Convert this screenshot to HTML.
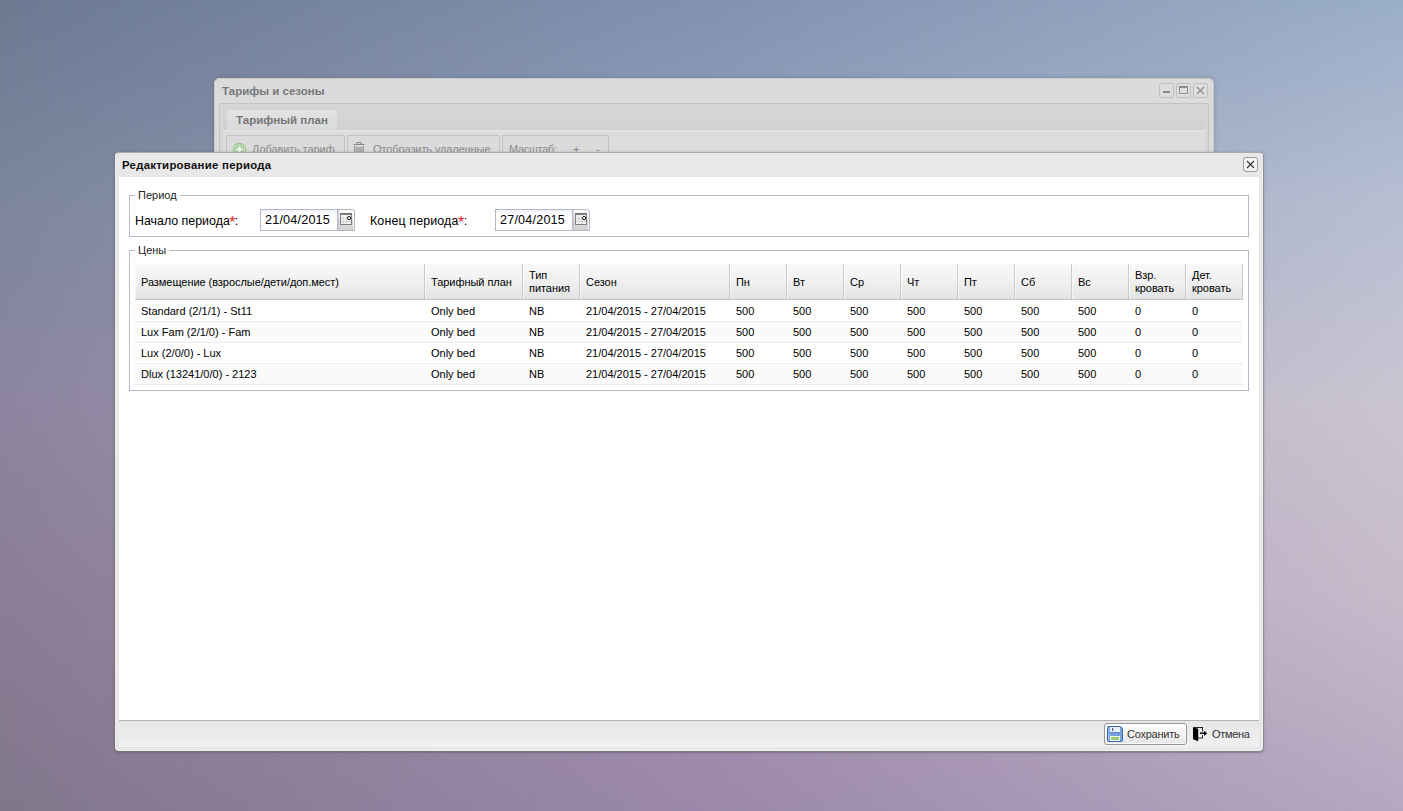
<!DOCTYPE html>
<html lang="ru">
<head>
<meta charset="utf-8">
<title>Редактирование периода</title>
<style>
*{box-sizing:border-box;margin:0;padding:0}
html,body{width:1403px;height:811px;overflow:hidden}
body{position:relative;font-family:"Liberation Sans",sans-serif;font-size:11px;color:#000;
background:linear-gradient(to bottom,#6c7a92 0%,#7d869f 24.7%,#8d85a0 49.5%,#8b7d96 74%,#81778c 100%)}
.abs{position:absolute}
#bgc{left:0;top:0;width:1403px;height:811px;
background:linear-gradient(to bottom,#8291b0 0%,#8897b5 8.6%,#99a2b8 24.7%,#aba5b9 49.5%,#a997b2 74%,#9f8aac 93.7%,#9b88ab 100%);
-webkit-mask-image:linear-gradient(to right,rgba(0,0,0,0) 0%,rgba(0,0,0,1) 50%);mask-image:linear-gradient(to right,rgba(0,0,0,0) 0%,rgba(0,0,0,1) 50%)}
#bgr{left:0;top:0;width:1403px;height:811px;
background:linear-gradient(to bottom,#9aaec8 0%,#b6bed2 24.7%,#cac5d2 49.5%,#c7bacb 74%,#b5a7c0 100%);
-webkit-mask-image:linear-gradient(to right,rgba(0,0,0,0) 50%,rgba(0,0,0,1) 100%);mask-image:linear-gradient(to right,rgba(0,0,0,0) 50%,rgba(0,0,0,1) 100%)}

/* ---------- background (masked) window ---------- */
#win{left:214px;top:78px;width:1000px;height:200px;background:#dbdbdb;border:1px solid #c9c9c9;border-radius:5px 5px 0 0;
box-shadow:0 0 4px rgba(80,80,100,.35)}
#win .ttl{left:7px;top:5px;font-weight:bold;font-size:11.5px;color:#777;white-space:nowrap;line-height:14px}
.tool{top:4px;width:15px;height:15px;border:1px solid #bebebe;border-radius:3px;background:#dedede}
#win .inner{left:4px;top:24px;width:990px;height:180px;border:1px solid #c4c4c4;background:#d6d6d6}
#win .strip{left:3px;top:3px;width:982px;height:23px;background:linear-gradient(#d8d8d8,#d1d1d1);border:1px solid #d2d2d2;border-bottom:none}
#win .tab{left:6px;top:5px;width:112px;height:21px;border:1px solid #d2d2d2;border-bottom:none;border-radius:4px 4px 0 0;background:linear-gradient(#e2e2e2,#dadada)}
#win .tab span{position:absolute;left:9px;top:3px;font-weight:bold;font-size:11.5px;color:#777;white-space:nowrap;line-height:14px}
#win .tbar{left:3px;top:26px;width:982px;height:60px;background:#dcdcdc;border-top:2px solid #e2e2e2}
.tbtn{top:3px;height:30px;border:1px solid #c3c3c3;border-radius:2px;background:#dbdbdb;color:#8a8a8a;font-size:11px;white-space:nowrap}
.tbtn span{position:absolute;top:6px;line-height:14px}

/* ---------- dialog ---------- */
#dlg{left:115px;top:152px;width:1148px;height:599px;background:#e8e8e8;border:1px solid #efefef;border-top-color:#a9a7a7;border-radius:4px;
box-shadow:0 1px 0 1px rgba(100,100,100,.3),0 1px 3px 1px rgba(90,90,90,.3)}
#dlg .ttl{left:6px;top:6px;font-weight:bold;font-size:11.4px;letter-spacing:.27px;color:#111;white-space:nowrap;line-height:13px}
#dlg .close{left:1127px;top:4px;width:15px;height:15px;border:1px solid #9a9a9a;border-radius:3px;background:#f4f4f4}
#body{left:3px;top:24px;width:1140px;height:544px;background:#fff;border-bottom:1px solid #b9b0b0}
#foot{left:3px;top:568px;width:1140px;height:26px;background:linear-gradient(#e6e6e6,#f1f1f1)}

fieldset{position:absolute;border:1px solid #b5b8c8;}
.lg{position:absolute;top:-7px;left:5px;background:#fff;padding:0 3px;font-size:11px;color:#222;line-height:13px;white-space:nowrap}
.lbl{position:absolute;font-size:12.4px;line-height:15px;white-space:nowrap;color:#000}
.lbl b{color:#e8232b;font-weight:normal;font-size:16px;line-height:0;position:relative;top:2.5px;margin:0 -.6px}
.inp{position:absolute;height:22px;width:78px;border:1px solid #b5b8c8;background:linear-gradient(#eef0f4 0,#fff 5px);font-size:12.6px;letter-spacing:.2px;line-height:20px;padding-left:4px;white-space:nowrap}
.trg{position:absolute;height:22px;width:17px}

/* grid */
#grid{left:5px;top:13px;width:1108px}
#hd{left:0;top:0;width:1108px;height:36px;background:linear-gradient(#f9f9f9 0,#f0f0f0 50%,#e3e4e6 100%);border-bottom:1px solid #c5c5c5}
.hc{position:absolute;top:0;height:35px;border-right:1px solid #cbcbcb;border-left:1px solid rgba(255,255,255,.55);font-size:11px;letter-spacing:-.05px;line-height:13px;color:#000;white-space:nowrap}
.hc span{position:absolute;left:5px}
.row{position:absolute;left:0;width:1108px;height:21px;border-bottom:1px solid #ededed;background:#fff}
.row.alt{background:#fafafa}
.row span{position:absolute;top:4px;font-size:11px;line-height:13px;white-space:nowrap;color:#000}

.btn{position:absolute;font-size:11px;line-height:13px;white-space:nowrap;color:#333}
</style>
</head>
<body>
<div id="bgc" class="abs"></div>
<div id="bgr" class="abs"></div>

<div id="win" class="abs">
  <div class="ttl abs">Тарифы и сезоны</div>
  <div class="tool abs" style="left:944px"><svg width="13" height="13" viewBox="0 0 13 13"><rect x="3" y="7" width="7" height="2" fill="#8c8c8c"/></svg></div>
  <div class="tool abs" style="left:961px"><svg width="13" height="13" viewBox="0 0 13 13"><rect x="2.5" y="2.5" width="8" height="7" fill="none" stroke="#8c8c8c"/><rect x="2" y="2" width="9" height="2" fill="#8c8c8c"/></svg></div>
  <div class="tool abs" style="left:978px"><svg width="13" height="13" viewBox="0 0 13 13"><path d="M3 3 L10 10 M10 3 L3 10" stroke="#8c8c8c" stroke-width="1.3" fill="none"/></svg></div>
  <div class="inner abs">
    <div class="strip abs"></div>
    <div class="tab abs"><span>Тарифный план</span></div>
    <div class="tbar abs">
      <div class="tbtn abs" style="left:3px;width:119px">
        <svg class="abs" style="left:5px;top:6px" width="15" height="15" viewBox="0 0 15 15"><circle cx="7.5" cy="7.5" r="6.7" fill="#96c48b"/><circle cx="7.5" cy="7.5" r="5.6" fill="#d3e8cd"/><circle cx="7.5" cy="7.5" r="4.7" fill="#a2cd98"/><path d="M7.5 4.2 V10.8 M4.2 7.5 H10.8" stroke="#f2f8f0" stroke-width="2.2"/></svg>
        <span style="left:25px;letter-spacing:-.1px">Добавить тариф</span></div>
      <div class="tbtn abs" style="left:124px;width:153px">
        <svg class="abs" style="left:5px;top:5px" width="12" height="16" viewBox="0 0 12 16"><path d="M0.5 3.5 H11.5 M4 3 V1.5 H8 V3 M1.8 5 V15 H10.2 V5 M4 6 V14 M6 6 V14 M8 6 V14" stroke="#878787" stroke-width="1.1" fill="none"/></svg>
        <span style="left:25px;letter-spacing:-.1px">Отобразить удаленные</span></div>
      <div class="tbtn abs" style="left:279px;width:107px">
        <span style="left:6px;letter-spacing:-.3px">Масштаб:</span><span style="left:70px">+</span><span style="left:93px">-</span></div>
    </div>
  </div>
</div>

<div id="dlg" class="abs">
  <div class="ttl abs">Редактирование периода</div>
  <div class="close abs"><svg width="13" height="13" viewBox="0 0 13 13"><path d="M3 3 L10 10 M10 3 L3 10" stroke="#333" stroke-width="1.15" fill="none"/></svg></div>
  <div id="body" class="abs">
    <fieldset style="left:10px;top:18px;width:1120px;height:42px">
      <div class="lg">Период</div>
      <div class="lbl" style="left:5px;top:18px">Начало периода<b>*</b>:</div>
      <div class="inp" style="left:130px;top:13px">21/04/2015</div><div class="trg" style="left:208px;top:13px"><svg width="17" height="22" viewBox="0 0 17 22"><defs><linearGradient id="tg" x1="0" y1="0" x2="0" y2="1"><stop offset="0" stop-color="#fbfbfb"/><stop offset=".4" stop-color="#f1f1f1"/><stop offset=".5" stop-color="#dcdcdc"/><stop offset="1" stop-color="#d0d0d0"/></linearGradient></defs><path d="M0 0.5 H14.5 Q16.5 0.5 16.5 2.5 V21.5 H0 Z" fill="url(#tg)" stroke="#b5b8c8"/><path d="M15.5 2 V20.5" stroke="#f7f7f7"/><rect x="2.5" y="4.5" width="11" height="11" fill="#f4f4f4" stroke="#808080"/><rect x="2" y="4" width="12" height="2" fill="#7a7a7a"/><path d="M5.5 7 V15 M8.5 7 V15 M3 9.5 H13 M3 12.5 H13" stroke="#d8d8d8"/><circle cx="11.1" cy="9.1" r="1.6" fill="#fff" stroke="#111" stroke-width="1"/></svg></div>
      <div class="lbl" style="left:240px;top:18px;letter-spacing:.15px">Конец периода<b>*</b>:</div>
      <div class="inp" style="left:365px;top:13px">27/04/2015</div><div class="trg" style="left:443px;top:13px"><svg width="17" height="22" viewBox="0 0 17 22"><defs><linearGradient id="tg2" x1="0" y1="0" x2="0" y2="1"><stop offset="0" stop-color="#fbfbfb"/><stop offset=".4" stop-color="#f1f1f1"/><stop offset=".5" stop-color="#dcdcdc"/><stop offset="1" stop-color="#d0d0d0"/></linearGradient></defs><path d="M0 0.5 H14.5 Q16.5 0.5 16.5 2.5 V21.5 H0 Z" fill="url(#tg2)" stroke="#b5b8c8"/><path d="M15.5 2 V20.5" stroke="#f7f7f7"/><rect x="2.5" y="4.5" width="11" height="11" fill="#f4f4f4" stroke="#808080"/><rect x="2" y="4" width="12" height="2" fill="#7a7a7a"/><path d="M5.5 7 V15 M8.5 7 V15 M3 9.5 H13 M3 12.5 H13" stroke="#d8d8d8"/><circle cx="11.1" cy="9.1" r="1.6" fill="#fff" stroke="#111" stroke-width="1"/></svg></div>
    </fieldset>
    <fieldset style="left:10px;top:73px;width:1120px;height:141px">
      <div class="lg">Цены</div>
      <div id="grid" class="abs">
        <div id="hd" class="abs">
<div class="hc" style="left:0px;width:290px"><span style="top:12px">Размещение (взрослые/дети/доп.мест)</span></div>
<div class="hc" style="left:290px;width:98px"><span style="top:12px">Тарифный план</span></div>
<div class="hc" style="left:388px;width:57px"><span style="top:5px">Тип<br>питания</span></div>
<div class="hc" style="left:445px;width:150px"><span style="top:12px">Сезон</span></div>
<div class="hc" style="left:595px;width:57px"><span style="top:12px">Пн</span></div>
<div class="hc" style="left:652px;width:57px"><span style="top:12px">Вт</span></div>
<div class="hc" style="left:709px;width:57px"><span style="top:12px">Ср</span></div>
<div class="hc" style="left:766px;width:57px"><span style="top:12px">Чт</span></div>
<div class="hc" style="left:823px;width:57px"><span style="top:12px">Пт</span></div>
<div class="hc" style="left:880px;width:57px"><span style="top:12px">Сб</span></div>
<div class="hc" style="left:937px;width:57px"><span style="top:12px">Вс</span></div>
<div class="hc" style="left:994px;width:57px"><span style="top:5px">Взр.<br>кровать</span></div>
<div class="hc" style="left:1051px;width:57px"><span style="top:5px">Дет.<br>кровать</span></div>
</div>
<div class="row" style="top:37px"><span style="left:6px">Standard (2/1/1) - St11</span><span style="left:296px">Only bed</span><span style="left:394px">NB</span><span style="left:451px">21/04/2015 - 27/04/2015</span><span style="left:601px">500</span><span style="left:658px">500</span><span style="left:715px">500</span><span style="left:772px">500</span><span style="left:829px">500</span><span style="left:886px">500</span><span style="left:943px">500</span><span style="left:1000px">0</span><span style="left:1057px">0</span></div>
<div class="row alt" style="top:58px"><span style="left:6px">Lux Fam (2/1/0) - Fam</span><span style="left:296px">Only bed</span><span style="left:394px">NB</span><span style="left:451px">21/04/2015 - 27/04/2015</span><span style="left:601px">500</span><span style="left:658px">500</span><span style="left:715px">500</span><span style="left:772px">500</span><span style="left:829px">500</span><span style="left:886px">500</span><span style="left:943px">500</span><span style="left:1000px">0</span><span style="left:1057px">0</span></div>
<div class="row" style="top:79px"><span style="left:6px">Lux (2/0/0) - Lux</span><span style="left:296px">Only bed</span><span style="left:394px">NB</span><span style="left:451px">21/04/2015 - 27/04/2015</span><span style="left:601px">500</span><span style="left:658px">500</span><span style="left:715px">500</span><span style="left:772px">500</span><span style="left:829px">500</span><span style="left:886px">500</span><span style="left:943px">500</span><span style="left:1000px">0</span><span style="left:1057px">0</span></div>
<div class="row alt" style="top:100px"><span style="left:6px">Dlux (13241/0/0) - 2123</span><span style="left:296px">Only bed</span><span style="left:394px">NB</span><span style="left:451px">21/04/2015 - 27/04/2015</span><span style="left:601px">500</span><span style="left:658px">500</span><span style="left:715px">500</span><span style="left:772px">500</span><span style="left:829px">500</span><span style="left:886px">500</span><span style="left:943px">500</span><span style="left:1000px">0</span><span style="left:1057px">0</span></div>
      </div>
    </fieldset>
  </div>
  <div id="foot" class="abs">
    <div class="abs" style="left:985px;top:2px;width:83px;height:22px;border:1px solid #969696;border-radius:3px;background:linear-gradient(#fdfdfd,#f0f0f0 55%,#e6e6e6);box-shadow:inset 0 0 0 1px rgba(255,255,255,.8)"></div>
    <svg class="abs" style="left:988px;top:5px" width="16" height="16" viewBox="0 0 16 16">
      <path d="M0.5 1.5 Q0.5 0.5 1.5 0.5 H13.5 L15.5 2.5 V14.5 Q15.5 15.5 14.5 15.5 H1.5 Q0.5 15.5 0.5 14.5 Z" fill="#76a1e2" stroke="#3f66a3" stroke-width="1"/>
      <path d="M1.5 1.5 V14.5" stroke="#9dbdee" stroke-width="1"/>
      <rect x="3" y="1" width="10" height="5" fill="#e9f0fb"/>
      <rect x="5" y="2" width="1.2" height="3" fill="#44628f"/>
      <rect x="3" y="6" width="10" height="1" fill="#5c86cc"/>
      <rect x="3" y="10" width="10" height="5" fill="#fbfdfb"/>
      <rect x="4" y="11" width="8" height="3" fill="#86c562"/>
      <rect x="4" y="12" width="8" height="1" fill="#a7da86"/>
    </svg>
    <div class="btn" style="left:1008px;top:7px;letter-spacing:-.25px">Сохранить</div>
    <svg class="abs" style="left:1073px;top:5px" width="16" height="16" viewBox="0 0 16 16">
      <path d="M1 1 H11 V5.5 H10 V2 H3 Z" fill="#222"/>
      <path d="M10 9 H11 V12.5 H6 V11.5 H10 Z" fill="#333"/>
      <path d="M1 1 L6.2 2.8 V15.2 L1 13.2 Z" fill="#000"/>
      <path d="M8 6.6 H12 V4.7 L15.2 7.3 L12 9.9 V8 H8 Z" fill="#000"/>
    </svg>
    <div class="btn" style="left:1093px;top:7px;letter-spacing:-.3px">Отмена</div>
  </div>
</div>
</body>
</html>
